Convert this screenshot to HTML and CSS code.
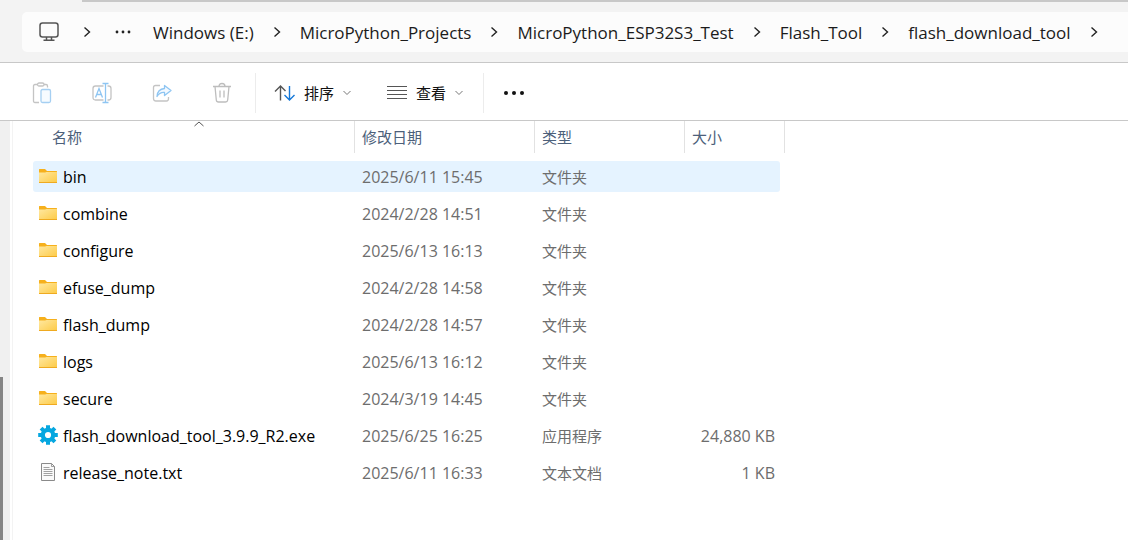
FILE: index.html
```html
<!DOCTYPE html>
<html lang="zh-CN">
<head>
    <meta charset="UTF-8">
    <meta name="viewport" content="width=device-width, initial-scale=1.0">
    <title>flash_download_tool</title>
    <link rel="stylesheet" href="styles.css">
</head>
<body>
  <!-- shared icons -->
  <svg class="sprite" aria-hidden="true">
    <defs>
      <linearGradient id="folderFill" x1="0" y1="0" x2="1" y2="1">
        <stop offset="0" stop-color="#ffe8a0"/>
        <stop offset="1" stop-color="#fdca45"/>
      </linearGradient>
      <symbol id="chevron" viewBox="0 0 8 12">
        <path d="M1.5 1.5 6.5 6l-5 4.5" fill="none" stroke="#222" stroke-width="1.4"/>
      </symbol>
      <symbol id="down" viewBox="0 0 10 6">
        <path d="M1.500 1 5 4.500 8.500 1" fill="none" stroke="#777" stroke-width="1"/>
      </symbol>
      <symbol id="folder" viewBox="0 0 20 20">
        <path d="M1 3.500Q1 3 1.500 3H7l2 2h9.500q.5 0 .5.500V9H1z" fill="#f6b01c"/>
        <path d="M1 6.500h6L8.500 6H19v10.500q0 .5-.5.500h-17q-.5 0-.5-.5z" fill="url(#folderFill)"/>
        <path d="M1 16.500h18" stroke="#efaa20" stroke-width="1"/>
      </symbol>
    </defs>
  </svg>

  <div class="window">
    <header class="address">
      <nav class="path" aria-label="Path">
        <div class="root">
          <button aria-label="This PC">
            <svg width="20" height="20" viewBox="0 0 20 20" fill="none" stroke="#555" stroke-width="1.5">
              <rect x="1" y="1" width="18" height="14" rx="2.500"/>
              <path d="M7.500 15v3M12.500 15v3M4.500 18.300h11"/>
            </svg>
          </button>
          <svg class="chevron"><use href="#chevron"/></svg>
          <button aria-label="More folders">
            <svg width="16" height="4" viewBox="0 0 16 4" fill="#222"><circle cx="2" cy="2" r="1.400"/><circle cx="8" cy="2" r="1.400"/><circle cx="14" cy="2" r="1.400"/></svg>
          </button>
        </div>
        <a href="#">Windows (E:)</a>
        <svg class="chevron"><use href="#chevron"/></svg>
        <a href="#">MicroPython_Projects</a>
        <svg class="chevron"><use href="#chevron"/></svg>
        <a href="#">MicroPython_ESP32S3_Test</a>
        <svg class="chevron"><use href="#chevron"/></svg>
        <a href="#">Flash_Tool</a>
        <svg class="chevron"><use href="#chevron"/></svg>
        <a href="#">flash_download_tool</a>
        <svg class="chevron"><use href="#chevron"/></svg>
      </nav>
    </header>

    <div class="toolbar">
      <div class="group edit">
        <button aria-label="粘贴" disabled>
          <svg width="20" height="22" viewBox="0 0 20 22" fill="none" stroke="#c4c4c4" stroke-width="1.300">
            <path d="M7 20.500H3Q1.500 20.500 1.500 19V4Q1.500 2.500 3 2.500h2.500M12 2.500h2Q15.500 2.500 15.500 4v1.500"/>
            <rect x="5.500" y="1" width="6.500" height="3" rx="1.500"/>
            <rect x="9" y="7.500" width="9.500" height="13" rx="1.500" stroke="#a5cff2" fill="#f6fbff"/>
          </svg>
        </button>
        <button aria-label="重命名" disabled>
          <svg width="20" height="22" viewBox="0 0 20 22" fill="none" stroke="#c4c4c4" stroke-width="1.300">
            <path d="M11.500 18H3.500Q1 18 1 15.500v-9Q1 4 3.500 4h8M15.500 4h1Q19 4 19 6.500v9q0 2.500-2.500 2.500h-1"/>
            <path d="M3.500 15.500 7 6.500l3.500 9M4.800 12.500h4.400M13.500 2v18M10.500 1.500h6M10.500 20.500h6" stroke="#8ec5f2"/>
          </svg>
        </button>
        <button aria-label="共享" disabled>
          <svg width="20" height="22" viewBox="0 0 20 22" fill="none" stroke="#c4c4c4" stroke-width="1.300" stroke-linejoin="round">
            <path d="M8 3.500H3.500Q1.500 3.500 1.500 5.500v11q0 2.500 2.500 2.500h10.500q2 0 2-2.500V15"/>
            <path d="M12.500 3.500 19 8.500l-6.500 5v-3Q8 10 5 14.500 5.500 7 12.500 6.500z" stroke="#8ec5f2" fill="#f3f9ff"/>
          </svg>
        </button>
        <button aria-label="删除" disabled>
          <svg width="20" height="22" viewBox="0 0 20 22" fill="none" stroke="#bdbdbd" stroke-width="1.300">
            <path d="M1 4.500h18M7 4.500Q7 1.500 10 1.500t3 3M3 4.500l1.300 13.500q.2 2 2.200 2h7q2 0 2.200-2L17 4.500M8 8.500v7M12 8.500v7"/>
          </svg>
        </button>
      </div>
      <div class="group">
        <button>
          <svg width="22" height="18" viewBox="0 0 22 18" fill="none" stroke-width="1.400">
            <path d="M6.500 16.500V2M1 7.500 6.500 2l5 5" stroke="#555"/>
            <path d="M15.500 2v14M10.500 11l5 5 5-5" stroke="#1678d8"/>
          </svg>
          <span>排序</span>
          <svg class="down"><use href="#down"/></svg>
        </button>
        <button>
          <svg width="22" height="18" viewBox="0 0 22 18" stroke="#555" stroke-width="1"><path d="M1 2.500h20M1 6.500h20M1 10.500h20M1 14.500h20"/></svg>
          <span>查看</span>
          <svg class="down"><use href="#down"/></svg>
        </button>
      </div>
      <button class="more" aria-label="查看更多">
        <svg width="22" height="6" viewBox="0 0 22 6" fill="#111"><circle cx="3" cy="3" r="2"/><circle cx="11" cy="3" r="2"/><circle cx="19" cy="3" r="2"/></svg>
      </button>
    </div>

    <main class="content">
      <div class="side"><div class="thumb"></div></div>
      <div class="files">
        <table>
          <thead>
            <tr>
              <th class="name" aria-sort="ascending">
                <button>名称</button>
                <svg class="sorted" width="10" height="6" viewBox="0 0 10 6" fill="none" stroke="#555"><path d="M.5 5 5 1l4.500 4"/></svg>
              </th>
              <th class="date"><button>修改日期</button></th>
              <th class="type"><button>类型</button></th>
              <th class="size"><button>大小</button></th>
            </tr>
          </thead>
          <tbody>
            <tr class="active">
              <td><div class="file"><svg class="icon"><use href="#folder"/></svg>bin</div></td>
              <td>2025/6/11 15:45</td><td class="kind">文件夹</td><td></td>
            </tr>
            <tr>
              <td><div class="file"><svg class="icon"><use href="#folder"/></svg>combine</div></td>
              <td>2024/2/28 14:51</td><td class="kind">文件夹</td><td></td>
            </tr>
            <tr>
              <td><div class="file"><svg class="icon"><use href="#folder"/></svg>configure</div></td>
              <td>2025/6/13 16:13</td><td class="kind">文件夹</td><td></td>
            </tr>
            <tr>
              <td><div class="file"><svg class="icon"><use href="#folder"/></svg>efuse_dump</div></td>
              <td>2024/2/28 14:58</td><td class="kind">文件夹</td><td></td>
            </tr>
            <tr>
              <td><div class="file"><svg class="icon"><use href="#folder"/></svg>flash_dump</div></td>
              <td>2024/2/28 14:57</td><td class="kind">文件夹</td><td></td>
            </tr>
            <tr>
              <td><div class="file"><svg class="icon"><use href="#folder"/></svg>logs</div></td>
              <td>2025/6/13 16:12</td><td class="kind">文件夹</td><td></td>
            </tr>
            <tr>
              <td><div class="file"><svg class="icon"><use href="#folder"/></svg>secure</div></td>
              <td>2024/3/19 14:45</td><td class="kind">文件夹</td><td></td>
            </tr>
            <tr>
              <td>
                <div class="file">
                  <svg class="icon" viewBox="0 0 20 20" fill="none" stroke="#06a7e0">
                    <circle cx="10" cy="10" r="5.200" stroke-width="4.200"/>
                    <path d="M10 .2v4M10 15.800v4M.2 10h4M15.800 10h4M3.100 3.100l2.800 2.800M14.100 14.100l2.800 2.800M16.900 3.100l-2.800 2.800M5.900 14.100l-2.800 2.800" stroke-width="4"/>
                  </svg>flash_download_tool_3.9.9_R2.exe
                </div>
              </td>
              <td>2025/6/25 16:25</td><td class="kind">应用程序</td><td>24,880 KB</td>
            </tr>
            <tr>
              <td>
                <div class="file">
                  <svg class="icon" viewBox="0 0 20 20" fill="none" stroke="#8a8a8a">
                    <path d="M3.500 1.500h10l3 3v14h-13z" fill="#fafafa"/>
                    <path d="M13.500 1.500v3h3M5.500 5.500h6M5.500 7.500h9M5.500 9.500h9M5.500 11.500h9M5.500 13.500h9" stroke-width=".8"/>
                  </svg>release_note.txt
                </div>
              </td>
              <td>2025/6/11 16:33</td><td class="kind">文本文档</td><td>1 KB</td>
            </tr>
          </tbody>
        </table>
      </div>
    </main>
  </div>
</body>
</html>
```
FILE: styles.css
```css
* {
  box-sizing: border-box;
}
body {
  margin: 0;
  font-family: "Open Sans", "Noto Sans CJK SC", sans-serif;
  font-size: 15px;
  color: #111;
  background: #fff;
}
button {
  display: flex;
  align-items: center;
  padding: 0;
  border: none;
  background: none;
  color: inherit;
  font: inherit;
  cursor: pointer;
}
svg {
  display: block;
  flex-shrink: 0;
}
.sprite {
  position: absolute;
  width: 0;
  height: 0;
}
.window {
  display: flex;
  flex-direction: column;
  min-height: 100vh;
  overflow: hidden;
}

/* address bar */
.address {
  padding: 12px 0 10px 22px;
  background: linear-gradient(#c8c8c8, #c8c8c8) 82px 0 / 100% 2px no-repeat #f3f3f3;
  border-bottom: 1px solid #c8c8c8;
}
.path {
  display: flex;
  align-items: center;
  gap: 19px;
  height: 40px;
  padding-left: 17px;
  background: #fcfcfc;
  border-radius: 5px 0 0 5px;
  font-size: 17px;
  white-space: nowrap;
}
.root {
  display: flex;
  align-items: center;
  gap: 24px;
  padding-right: 3px;
}
.path a {
  color: #1b1b1b;
  text-decoration: none;
}
.chevron {
  width: 8px;
  height: 12px;
}

/* toolbar */
.toolbar {
  display: flex;
  align-items: center;
  height: 58px;
  padding-top: 2px;
  border-bottom: 1px solid #c8c8c8;
}
.group {
  display: flex;
  align-items: center;
  gap: 34px;
  height: 40px;
  padding: 0 19px 0 18px;
  border-right: 1px solid #ececec;
}
.group button {
  gap: 8px;
}
.edit {
  gap: 40px;
  padding: 0 23px 0 32px;
}
.down {
  width: 10px;
  height: 6px;
}
.more {
  margin-left: 19px;
}

/* file list */
.content {
  display: flex;
  flex: 1;
}
.side {
  display: flex;
  align-items: flex-end;
  width: 10px;
  background: #f0f0f0;
}
.thumb {
  width: 3px;
  height: 39%;
  background: #858585;
}
.files {
  flex: 1;
  margin-left: 2px;
  padding-left: 20px;
  border-left: 1px solid #f3f3f3;
}
table {
  table-layout: fixed;
  width: 747px;
  margin-top: -6px;
  border-spacing: 0 6px;
}
th {
  position: relative;
  height: 34px;
  padding: 0;
  vertical-align: top;
  font-weight: normal;
  color: #4c607a;
}
th button {
  width: 100%;
  height: 32px;
  padding: 0 0 2px 7px;
  border-right: 1px solid #e2e2e2;
}
.name {
  width: 322px;
}
.name button {
  padding-left: 19px;
}
.date {
  width: 180px;
}
.type {
  width: 150px;
}
.size button {
  width: 100px;
}
.sorted {
  position: absolute;
  top: 0;
  left: 50%;
}
td {
  height: 31px;
  padding: 0 5px 0 7px;
  font-size: 16px;
  color: #6d6d6d;
  line-height: 20px;
  white-space: nowrap;
}
td:first-child {
  padding-left: 5px;
  color: #000;
  border-radius: 3px 0 0 3px;
}
td:last-child {
  text-align: right;
  border-radius: 0 3px 3px 0;
}
.kind {
  font-size: 15px;
}
.active td {
  background: #e5f3ff;
}
.file {
  display: flex;
  align-items: center;
  gap: 5px;
}
.icon {
  width: 20px;
  height: 20px;
  margin-bottom: 1px;
}
```
